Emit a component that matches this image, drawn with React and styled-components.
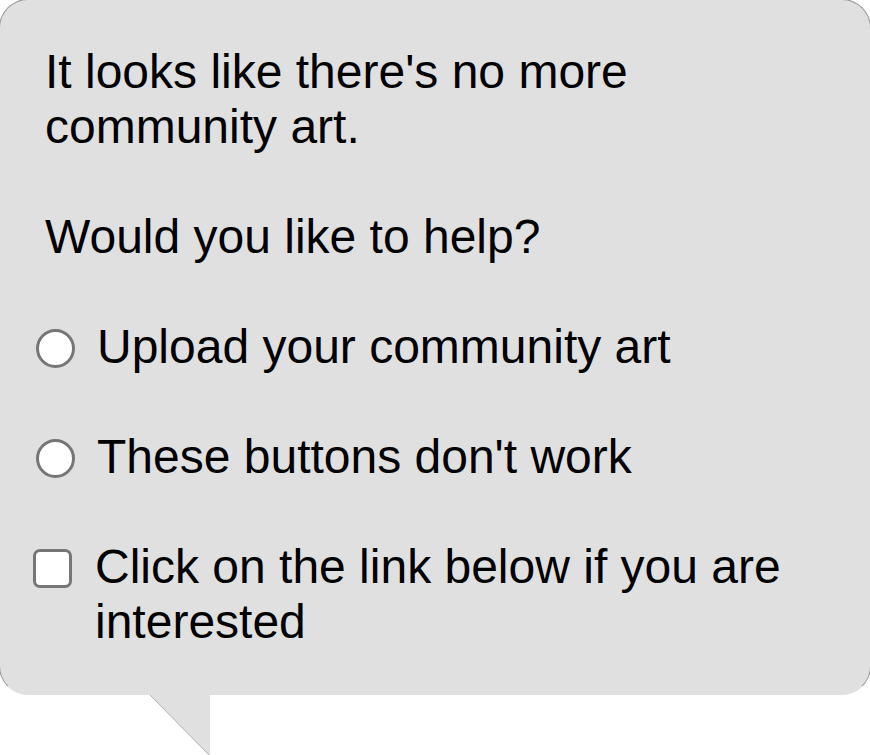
import React from 'react';
import styled, { createGlobalStyle } from 'styled-components';

const GlobalStyle = createGlobalStyle`
  html, body {
    margin: 0;
    padding: 0;
    background: #fff;
    overflow: hidden;
  }
  body {
    font-family: "Liberation Sans", Arial, sans-serif;
  }
`;

const Page = styled.div`
  width: 870px;
  height: 755px;
  overflow: hidden;
`;

const Bubble = styled.section`
  margin: -1px -1px 0 -1px;
  padding: 44px 40px 45px 33px;
  background: #e0e0e0;
  border: 1px solid #999;
  border-bottom-color: #e0e0e0;
  border-radius: 29px;
  color: #000;
  font-size: 48px;
  line-height: 55px;
`;

const Text = styled.p`
  margin: ${(p) => (p.$gap ? '55px' : '0')} 0 0;
  padding-left: 12px;
`;

const Options = styled.div`
  display: flex;
  flex-direction: column;
  gap: 55px;
  margin-top: 55px;
`;

const Option = styled.label`
  display: flex;
  align-items: flex-start;
  gap: ${(p) => (p.$type === 'checkbox' ? '23px' : '22px')};
  padding-left: ${(p) => (p.$type === 'checkbox' ? '0' : '3px')};
  cursor: pointer;
`;

const Control = styled.input`
  appearance: none;
  flex: none;
  width: 39px;
  height: 39px;
  margin: 10px 0 0;
  box-sizing: border-box;
  background: #fff;
  border: 3px solid #767676;
  border-radius: ${(p) => (p.type === 'radio' ? '50%' : '7px')};
`;

const Tail = styled.svg`
  display: block;
  margin-left: 150px;
`;

const options = [
  { type: 'radio', label: 'Upload your community art' },
  { type: 'radio', label: "These buttons don't work" },
  { type: 'checkbox', label: 'Click on the link below if you are interested' },
];

export default function App() {
  return (
    <Page>
      <GlobalStyle />
      <Bubble>
        <Text>It looks like there's no more community art.</Text>
        <Text $gap>Would you like to help?</Text>
        <Options>
          {options.map((o) => (
            <Option key={o.label} $type={o.type}>
              <Control type={o.type} name={o.type === 'radio' ? 'help' : undefined} />
              <span>{o.label}</span>
            </Option>
          ))}
        </Options>
      </Bubble>
      <Tail width="61" height="61" viewBox="0 0 61 61">
        <polygon points="0,0 60,0 60,61 0,0" fill="#e0e0e0" />
        <line x1="0" y1="0" x2="60" y2="61" stroke="#8c8c8c" strokeWidth="0.6" />
      </Tail>
    </Page>
  );
}
